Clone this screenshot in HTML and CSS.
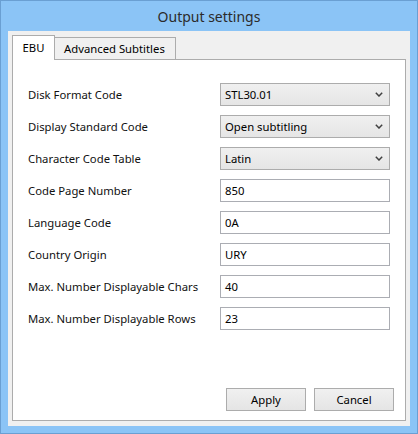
FILE: index.html
```html
<!DOCTYPE html>
<html>
<head>
<meta charset="utf-8">
<link rel="stylesheet" href="styles.css">
</head>
<body>
<div class="frame">
  <div class="titlebar">Output settings</div>
  <div class="client">
    <div class="tabs">
      <div class="tab active">EBU</div>
      <div class="tab">Advanced Subtitles</div>
    </div>
    <div class="panel">
      <div class="form">
        <div class="label">Disk Format Code</div>
        <div class="combo"><span>STL30.01</span><svg class="chev" width="8" height="5" viewBox="0 0 8 5"><polyline points="0.8,0.8 4,4 7.2,0.8" fill="none" stroke="#404040" stroke-width="1.5"/></svg></div>
        <div class="label">Display Standard Code</div>
        <div class="combo"><span>Open subtitling</span><svg class="chev" width="8" height="5" viewBox="0 0 8 5"><polyline points="0.8,0.8 4,4 7.2,0.8" fill="none" stroke="#404040" stroke-width="1.5"/></svg></div>
        <div class="label">Character Code Table</div>
        <div class="combo"><span>Latin</span><svg class="chev" width="8" height="5" viewBox="0 0 8 5"><polyline points="0.8,0.8 4,4 7.2,0.8" fill="none" stroke="#404040" stroke-width="1.5"/></svg></div>
        <div class="label">Code Page Number</div>
        <div class="text">850</div>
        <div class="label">Language Code</div>
        <div class="text">0A</div>
        <div class="label">Country Origin</div>
        <div class="text">URY</div>
        <div class="label">Max. Number Displayable Chars</div>
        <div class="text">40</div>
        <div class="label">Max. Number Displayable Rows</div>
        <div class="text">23</div>
      </div>
      <div class="buttons">
        <div class="btn">Apply</div>
        <div class="btn">Cancel</div>
      </div>
    </div>
  </div>
</div>
</body>
</html>
```
FILE: styles.css
```css
html, body {
  margin: 0;
  padding: 0;
}
body {
  width: 418px;
  height: 434px;
  font-family: "Noto Sans", "Open Sans", sans-serif;
  font-size: 11.3px;
  color: #000;
}
.frame {
  box-sizing: border-box;
  width: 418px;
  height: 434px;
  background: #8bc4f6;
  border: 1px solid #6a9fd2;
  display: flex;
  flex-direction: column;
  padding: 0 7px 7px 7px;
}
.titlebar {
  height: 30px;
  line-height: 31px;
  text-align: center;
  font-size: 14px;
  color: #2b2b2b;
}
.client {
  flex: 1;
  background: #f0f0f0;
  display: flex;
  flex-direction: column;
  padding: 4px 4px 5px 4px;
}
.tabs {
  display: flex;
  align-items: flex-end;
  height: 24px;
  position: relative;
  z-index: 1;
}
.tab {
  box-sizing: border-box;
  height: 22px;
  border: 1px solid #acacac;
  border-bottom: none;
  background: #f0f0f0;
  padding: 0 0 0 9px;
  line-height: 21px;
  white-space: nowrap;
}
.tab + .tab {
  border-left: none;
  width: 121px;
}
.tab.active {
  width: 43px;
  height: 25px;
  margin-bottom: -1px;
  background: #fff;
  text-align: center;
  padding: 0;
  line-height: 23px;
}
.panel {
  flex: 1;
  background: #fff;
  border: 1px solid #acacac;
  display: flex;
  flex-direction: column;
}
.form {
  display: grid;
  grid-template-columns: 192px 170px;
  grid-auto-rows: 23px;
  row-gap: 9px;
  padding: 23px 0 0 15px;
  align-items: center;
}
.label {
  line-height: 23px;
  color: #111;
}
.combo, .text {
  box-sizing: border-box;
  height: 23px;
  border: 1px solid #acacac;
  display: flex;
  align-items: center;
  padding: 0 4px;
}
.combo {
  background: linear-gradient(#f0f0f0, #e5e5e5);
  justify-content: space-between;
  padding-right: 6px;
}
.text {
  border-color: #abadb3;
  background: #fff;
  padding-left: 4px;
}
.buttons {
  margin-top: auto;
  display: flex;
  justify-content: flex-end;
  gap: 8px;
  padding: 0 11px 9px 0;
}
.btn {
  box-sizing: border-box;
  width: 80px;
  height: 23px;
  border: 1px solid #acacac;
  background: linear-gradient(#f0f0f0, #e5e5e5);
  text-align: center;
  line-height: 21px;
}
```
